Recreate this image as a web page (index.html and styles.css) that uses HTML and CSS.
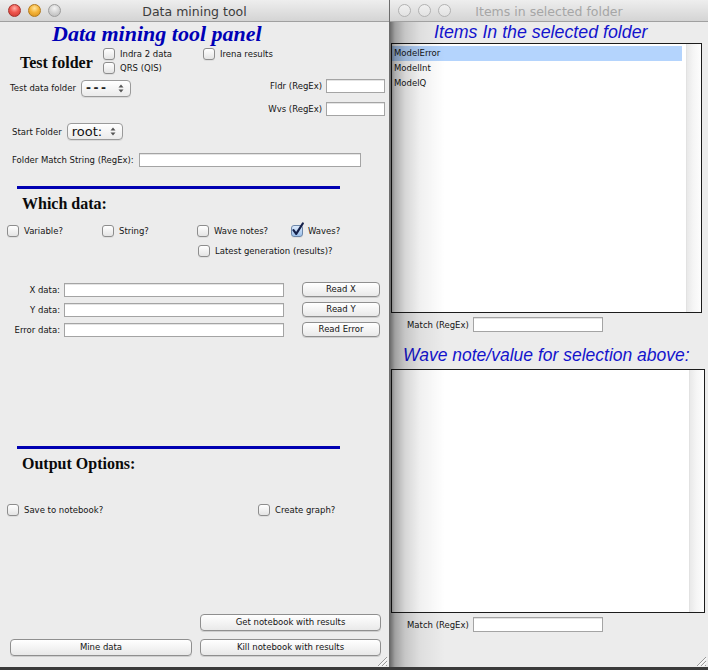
FILE: index.html
```html
<!DOCTYPE html>
<html>
<head>
<meta charset="utf-8">
<title>Data mining tool</title>
<link rel="stylesheet" href="styles.css">
</head>
<body>
<div class="desktop">
  <section class="win win-left">
    <header class="titlebar">
      <div class="lights"><span class="light red"></span><span class="light yellow"></span><span class="light dim"></span></div>
      <div class="title">Data mining tool</div>
      <div></div>
    </header>
    <div class="lbody">
      <h1 class="panel-title">Data mining tool panel</h1>
      <div class="row r-test">
        <div class="sec sec-test">Test folder</div>
        <div class="cb-col c1">
          <label class="cb"><span class="box"></span>Indra 2 data</label>
          <label class="cb"><span class="box"></span>QRS (QIS)</label>
        </div>
        <div class="cb-col">
          <label class="cb"><span class="box"></span>Irena results</label>
        </div>
      </div>
      <div class="row r-folder">
        <span class="lbl">Test data folder</span>
        <span class="pop pop-test"><span class="dashes">---</span><svg class="arrows" width="6" height="9" viewBox="0 0 6 9"><path d="M3 0.5 L5.5 3.5 H0.5Z M3 8.5 L5.5 5.5 H0.5Z" fill="#555"/></svg></span>
        <span class="regex"><span class="lbl">Fldr (RegEx)</span><span class="inp inp-sm"></span></span>
      </div>
      <div class="row r-wvs">
        <span class="regex"><span class="lbl">Wvs (RegEx)</span><span class="inp inp-sm"></span></span>
      </div>
      <div class="row r-start">
        <span class="lbl">Start Folder</span>
        <span class="pop pop-root"><span class="root">root:</span><svg class="arrows" width="6" height="9" viewBox="0 0 6 9"><path d="M3 0.5 L5.5 3.5 H0.5Z M3 8.5 L5.5 5.5 H0.5Z" fill="#555"/></svg></span>
      </div>
      <div class="row r-match">
        <span class="lbl">Folder Match String (RegEx):</span>
        <span class="inp inp-match"></span>
      </div>
      <div class="rule r-rule1"></div>
      <h2 class="sec r-which">Which data:</h2>
      <div class="row r-types">
        <label class="cb w95"><span class="box"></span>Variable?</label>
        <label class="cb w95"><span class="box"></span>String?</label>
        <label class="cb w94"><span class="box"></span>Wave notes?</label>
        <label class="cb"><span class="box checked"><svg class="tick" width="14" height="15" viewBox="0 0 14 15"><path d="M2.5 8.2 L5.2 11.8 L11.8 1.5" fill="none" stroke="#14204a" stroke-width="2.2" stroke-linecap="round" stroke-linejoin="round"/></svg></span>Waves?</label>
      </div>
      <div class="row r-latest">
        <label class="cb"><span class="box"></span>Latest generation (results)?</label>
      </div>
      <div class="row drow r-x"><span class="dlbl">X data:</span><span class="inp inp-data"></span><button class="btn btn-read">Read X</button></div>
      <div class="row drow r-y"><span class="dlbl">Y data:</span><span class="inp inp-data"></span><button class="btn btn-read">Read Y</button></div>
      <div class="row drow r-y"><span class="dlbl">Error data:</span><span class="inp inp-data"></span><button class="btn btn-read">Read Error</button></div>
      <div class="rule r-rule2"></div>
      <h2 class="sec r-output">Output Options:</h2>
      <div class="row r-save">
        <label class="cb w251"><span class="box"></span>Save to notebook?</label>
        <label class="cb"><span class="box"></span>Create graph?</label>
      </div>
      <div class="row r-get"><button class="btn btn-wide">Get notebook with results</button></div>
      <div class="row r-mine"><button class="btn btn-mine">Mine data</button><button class="btn btn-wide">Kill notebook with results</button></div>
    </div>
    <svg class="grip" width="13" height="13" viewBox="0 0 13 13"><path d="M12 3 L3 12 M12 7 L7 12 M12 11 L11 12" stroke="#9a9a9a" stroke-width="1"/><path d="M12.5 4 L4 12.5 M12.5 8 L8 12.5" stroke="#fff" stroke-width="1"/></svg>
  </section>

  <section class="win win-right">
    <header class="titlebar">
      <div class="lights"><span class="light hollow"></span><span class="light hollow"></span><span class="light hollow"></span></div>
      <div class="title">Items in selected folder</div>
      <div></div>
    </header>
    <div class="rbody">
      <h2 class="blue-head r-items">Items In the selected folder</h2>
      <div class="listbox lb-top">
        <ul class="items">
          <li class="sel">ModelError</li>
          <li>ModelInt</li>
          <li>ModelQ</li>
        </ul>
        <div class="track"></div>
      </div>
      <div class="row mrow"><span class="lbl">Match (RegEx)</span><span class="inp inp-m"></span></div>
      <h2 class="blue-head r-wave">Wave note/value for selection above:</h2>
      <div class="listbox lb-bottom">
        <div class="items"></div>
        <div class="track"></div>
      </div>
      <div class="row mrow"><span class="lbl">Match (RegEx)</span><span class="inp inp-m"></span></div>
      <div class="shadow"></div>
    </div>
    <svg class="grip" width="13" height="13" viewBox="0 0 13 13"><path d="M12 3 L3 12 M12 7 L7 12 M12 11 L11 12" stroke="#9a9a9a" stroke-width="1"/><path d="M12.5 4 L4 12.5 M12.5 8 L8 12.5" stroke="#fff" stroke-width="1"/></svg>
  </section>
</div>
</body>
</html>
```
FILE: styles.css
```css
* { box-sizing: border-box; }

body {
  margin: 0;
  background: #3a3a3a;
  font-family: "DejaVu Sans", sans-serif;
  font-size: 8.5px;
  color: #141414;
}

.desktop {
  display: flex;
  width: 708px;
  height: 670px;
  overflow: hidden;
}

.win {
  position: relative;
  height: 667px;
  background: #ececec;
  display: flex;
  flex-direction: column;
}

.win-left {
  width: 390px;
  border-right: 1px solid #6c6c6c;
}

.win-right {
  width: 318px;
}

/* title bars */
.titlebar {
  flex: none;
  height: 22px;
  border-bottom: 1px solid #a0a0a0;
  background: linear-gradient(#eeeeee, #d4d4d4);
  display: grid;
  grid-template-columns: 1fr auto 1fr;
  align-items: start;
}

.lights {
  display: flex;
  gap: 7px;
  padding: 4px 0 0 8px;
}

.light {
  width: 13px;
  height: 13px;
  border-radius: 50%;
}

.red {
  background: radial-gradient(circle at 50% 30%, #ffb0a8 0, #f0574f 45%, #c7362f 100%);
  border: 1px solid #a5302a;
}

.yellow {
  background: radial-gradient(circle at 50% 30%, #ffe6a0 0, #f5b53b 45%, #d58d18 100%);
  border: 1px solid #b37a1a;
}

.dim {
  background: radial-gradient(circle at 50% 30%, #f4f4f4 0, #d0d0d0 55%, #b8b8b8 100%);
  border: 1px solid #9c9c9c;
}

.hollow {
  background: linear-gradient(#f0f0f0, #e2e2e2);
  border: 1px solid #b2b2b2;
}

.title {
  font-size: 12.5px;
  line-height: 21px;
  padding-top: 1px;
  color: #3c3c3c;
  white-space: nowrap;
}

.win-right .title {
  color: #a6a6a6;
}

/* left window body */
.lbody {
  display: flex;
  flex-direction: column;
}

.row {
  display: flex;
  align-items: center;
}

.panel-title {
  margin: 0;
  height: 24px;
  line-height: 24px;
  padding-left: 52px;
  font-family: "Liberation Serif", serif;
  font-size: 22px;
  font-weight: bold;
  font-style: italic;
  color: #0000b6;
  white-space: nowrap;
}

.sec {
  margin: 0;
  font-family: "Liberation Serif", serif;
  font-size: 16px;
  font-weight: bold;
  color: #0a0a0a;
  white-space: nowrap;
}

.r-test {
  margin-top: 1px;
  height: 28px;
}

.sec-test {
  width: 103px;
  padding-left: 20px;
  padding-top: 4px;
}

.cb-col {
  display: flex;
  flex-direction: column;
  justify-content: flex-start;
  align-self: stretch;
}

.cb-col .cb {
  height: 14px;
}

.c1 {
  width: 100px;
}

.cb {
  display: flex;
  align-items: center;
  gap: 5px;
  white-space: nowrap;
}

.box {
  position: relative;
  flex: none;
  width: 12px;
  height: 12px;
  border: 1px solid #8d8d8d;
  border-radius: 3px;
  background: linear-gradient(#ffffff, #e4e4e4);
  box-shadow: 0 1px 0 rgba(0, 0, 0, 0.06);
}

.box.checked {
  background: linear-gradient(#dbe9fb, #9cc0ea);
  border-color: #6c86a8;
}

.tick {
  position: absolute;
  left: -1px;
  top: -4px;
}

.w95 { width: 95px; }
.w94 { width: 94px; }
.w251 { width: 251px; }

.lbl {
  white-space: nowrap;
}

.inp {
  display: block;
  flex: none;
  height: 14px;
  background: #ffffff;
  border: 1px solid #a4a4a4;
  box-shadow: inset 0 1px 0 #e4e4e4;
}

.inp-sm { width: 59px; }
.inp-match { width: 222px; margin-left: 5px; }
.inp-data { width: 220px; }
.inp-m { width: 130px; height: 15px; }

.pop {
  display: flex;
  align-items: center;
  justify-content: space-between;
  flex: none;
  height: 17px;
  border: 1px solid #9a9a9a;
  border-radius: 4px;
  background: linear-gradient(#ffffff, #ebebeb);
  box-shadow: 0 1px 0 rgba(0, 0, 0, 0.08);
  padding: 0 6px 0 4px;
}

.pop-test {
  width: 50px;
  margin-left: 5px;
}

.dashes {
  font-size: 12px;
  font-weight: bold;
  letter-spacing: 2.5px;
  color: #222;
}

.pop-root {
  width: 56px;
  margin-left: 5px;
  padding-left: 4px;
}

.root {
  font-size: 13px;
  color: #111;
  line-height: 15px;
}

.regex {
  display: flex;
  align-items: center;
  gap: 4px;
  margin-left: auto;
  padding-right: 4px;
}

.r-folder {
  margin-top: 3px;
  height: 20px;
  padding-left: 10px;
}

.r-folder .regex {
  align-self: flex-start;
  margin-top: 1px;
}

.r-wvs {
  margin-top: 4px;
  height: 14px;
}

.r-start {
  margin-top: 7px;
  height: 17px;
  padding-left: 12px;
}

.r-match {
  margin-top: 13px;
  height: 14px;
  padding-left: 12px;
}

.rule {
  height: 3px;
  width: 323px;
  margin-left: 17px;
  background: #0000b2;
}

.r-rule1 { margin-top: 19px; }

.r-which {
  margin-top: 6px;
  height: 18px;
  line-height: 18px;
  padding-left: 22px;
}

.r-types {
  margin-top: 9px;
  height: 17px;
  padding-left: 7px;
}

.r-latest {
  margin-top: 3px;
  height: 17px;
  padding-left: 198px;
}

.drow {
  height: 15px;
}

.r-x { margin-top: 23px; }
.r-y { margin-top: 5px; }

.dlbl {
  width: 60px;
  text-align: right;
  margin-right: 4px;
  white-space: nowrap;
}

.btn {
  font: inherit;
  color: #141414;
  height: 15px;
  padding: 0;
  border: 1px solid #8f8f8f;
  border-radius: 4px;
  background: linear-gradient(#ffffff, #e9e9e9);
  box-shadow: 0 1px 0 rgba(0, 0, 0, 0.12);
  text-align: center;
  line-height: 13px;
  white-space: nowrap;
}

.btn-read {
  width: 78px;
  margin-left: 18px;
}

.r-rule2 { margin-top: 109px; }

.r-output {
  margin-top: 6px;
  height: 18px;
  line-height: 18px;
  padding-left: 22px;
}

.r-save {
  margin-top: 28px;
  height: 17px;
  padding-left: 7px;
}

.r-get {
  margin-top: 95px;
  height: 18px;
  padding-left: 200px;
}

.r-mine {
  margin-top: 7px;
  height: 18px;
  padding-left: 10px;
}

.btn-wide {
  width: 181px;
  height: 17px;
  line-height: 15px;
}

.btn-mine {
  width: 182px;
  height: 17px;
  line-height: 15px;
  margin-right: 8px;
}

.grip {
  position: absolute;
  right: 1px;
  bottom: 0;
}

/* right window body */
.rbody {
  position: relative;
  display: flex;
  flex-direction: column;
  flex: 1;
}

.blue-head {
  margin: 0;
  font-family: "Liberation Sans", sans-serif;
  font-style: italic;
  font-weight: normal;
  color: #1414cc;
  white-space: nowrap;
}

.r-items {
  height: 21px;
  line-height: 21px;
  font-size: 17.8px;
  padding-left: 44px;
}

.r-wave {
  margin-top: 12px;
  height: 22px;
  line-height: 22px;
  font-size: 17.5px;
  padding-left: 13px;
}

.listbox {
  display: flex;
  margin-left: 1px;
  background: #ffffff;
  border: 1px solid #1c1c1c;
}

.lb-top {
  width: 311px;
  height: 270px;
}

.lb-bottom {
  margin-top: 3px;
  width: 314px;
  height: 244px;
}

.items {
  flex: 1;
  list-style: none;
  margin: 0;
  padding: 2px 4px 0 0;
}

.items li {
  height: 15px;
  line-height: 15px;
  padding-left: 2px;
  white-space: nowrap;
}

.items li.sel {
  background: #b4d4fd;
}

.track {
  flex: none;
  width: 15px;
  border-left: 1px solid #e2e2e2;
  background: linear-gradient(to right, #e9e9e9, #f5f5f5 45%, #fdfdfd);
}

.mrow {
  margin-top: 4px;
  height: 15px;
  padding-left: 17px;
  gap: 4px;
}

.shadow {
  position: absolute;
  left: 0;
  top: 0;
  bottom: 0;
  width: 55px;
  pointer-events: none;
  background: linear-gradient(to right,
    rgba(0, 0, 0, 0.55) 0,
    rgba(0, 0, 0, 0.32) 5px,
    rgba(0, 0, 0, 0.16) 15px,
    rgba(0, 0, 0, 0.06) 30px,
    rgba(0, 0, 0, 0) 55px);
}
```
